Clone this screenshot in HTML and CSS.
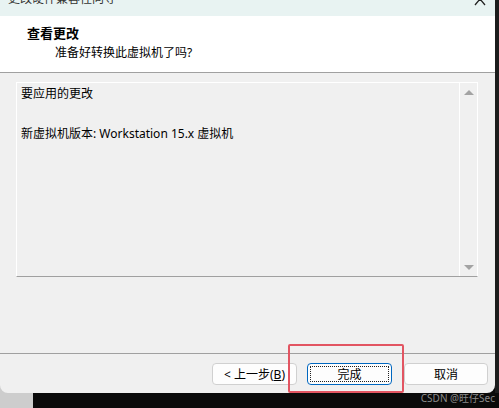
FILE: index.html
```html
<!DOCTYPE html>
<html lang="zh-CN">
<head>
    <meta charset="UTF-8">
    <meta name="viewport" content="width=device-width, initial-scale=1.0">
    <title>更改硬件兼容性向导</title>
    <link rel="stylesheet" href="styles.css">
</head>
<body>
    <div class="desktop">
        <div class="window">
            <div class="titlebar">
                <span class="title-text">更改硬件兼容性向导</span>
                <svg class="caret" width="12" height="8" viewBox="0 0 12 8">
                    <polyline points="1,7 6,1 11,7" fill="none" stroke="#222" stroke-width="1.3"/>
                </svg>
            </div>

            <div class="header">
                <div class="head-title">查看更改</div>
                <div class="head-sub">准备好转换此虚拟机了吗?</div>
            </div>

            <div class="body">
                <div class="changes">
                    <div class="changes-text">
                        <p>要应用的更改</p>
                        <p>新虚拟机版本: Workstation 15.x 虚拟机</p>
                    </div>
                    <div class="scrollbar">
                        <span class="arrow up"></span>
                        <span class="arrow down"></span>
                    </div>
                </div>
            </div>

            <div class="buttons">
                <button class="btn">&lt; 上一步(<u>B</u>)</button>
                <button class="btn default"><span class="focus">完成</span></button>
                <button class="btn cancel">取消</button>
            </div>
        </div>
        <div class="taskbar"></div>

        <!-- highlight + watermark lie over the screenshot -->
        <div class="highlight"></div>
        <div class="watermark">CSDN @旺仔Sec</div>
    </div>
</body>
</html>
```

FILE: styles.css
```css
body{
    margin: 0;
    font-family: "Noto Sans", "Noto Sans CJK SC", sans-serif;
    font-size: 12px;
    color: #000;
}
.desktop{
    position: relative;
    width: 499px;
    height: 408px;
    overflow: hidden;
    background: linear-gradient(to right, #cdcdcd 0, #cdcdcd 33px, #0a0a0a 33px);
    display: flex;
    flex-direction: column;
}
.desktop::after{
    content: "";
    position: absolute;
    top: 0;
    right: 0;
    width: 4px;
    height: 393px;
    background: #1c1c1c;
}
.window{
    width: 495px;
    height: 393px;
    background: #f0f0f0;
    border-radius: 0 0 8px 8px;
    display: flex;
    flex-direction: column;
    overflow: hidden;
}
.titlebar{
    height: 16px;
    background: #e8f3f2;
    display: flex;
    justify-content: space-between;
    overflow: hidden;
}
.title-text{
    margin-top: -9px;
    margin-left: 8px;
    line-height: 16px;
    color: #333;
    font-size: 12px;
}
.caret{
    margin-top: -2px;
    margin-right: 9px;
}
.header{
    height: 57px;
    background: #fff;
    border-bottom: 1px solid #a0a0a0;
    box-sizing: border-box;
    padding-top: 9px;
}
.head-title{
    margin-left: 27px;
    font-weight: bold;
    font-size: 13px;
    line-height: 17px;
}
.head-sub{
    margin-left: 55px;
    margin-top: 2px;
    line-height: 17px;
}
.body{
    flex: 1;
    padding: 9px 17px 0 16px;
    border-bottom: 1px solid #a0a0a0;
}
.changes{
    display: flex;
    height: 195px;
    box-sizing: border-box;
    border: 1px solid #fff;
    border-bottom-color: #a0a0a0;
}
.changes-text{
    flex: 1;
    padding: 2px 4px;
}
.changes-text p{
    margin: 0 0 23px 0;
    line-height: 17px;
}
.scrollbar{
    width: 17px;
    border-left: 1px solid #fff;
    display: flex;
    flex-direction: column;
    justify-content: space-between;
    align-items: center;
    padding: 7px 0 6px;
}
.arrow{
    width: 0;
    height: 0;
    border-left: 5px solid transparent;
    border-right: 5px solid transparent;
}
.arrow.up{
    border-bottom: 5px solid #a3a3a3;
}
.arrow.down{
    border-top: 5px solid #a3a3a3;
}
.buttons{
    height: 39px;
    display: flex;
    justify-content: flex-end;
    align-items: flex-start;
    padding: 9px 7px 0 0;
    box-sizing: border-box;
    gap: 10px;
}
.btn{
    height: 22px;
    width: 85px;
    padding: 0;
    font-family: "Noto Sans", "Noto Sans CJK SC", sans-serif;
    font-size: 12px;
    color: #000;
    background: #fdfdfd;
    border: 1px solid #d0d0d0;
    border-radius: 4px;
}
.btn.default{
    border-color: #0067c0;
    padding: 2px;
}
.btn .focus{
    display: flex;
    align-items: center;
    justify-content: center;
    height: 100%;
    box-sizing: border-box;
    border: 1px dotted #222;
}
.btn.cancel{
    width: 84px;
    margin-left: 2px;
}
.taskbar{
    flex: 1;
}
.highlight{
    position: absolute;
    left: 288px;
    top: 344px;
    width: 116px;
    height: 49px;
    box-sizing: border-box;
    border: 2px solid #e25562;
    border-radius: 2px;
}
.watermark{
    position: absolute;
    right: 4px;
    top: 391px;
    font-size: 10px;
    line-height: 14px;
    color: #8a8a8a;
}
```
